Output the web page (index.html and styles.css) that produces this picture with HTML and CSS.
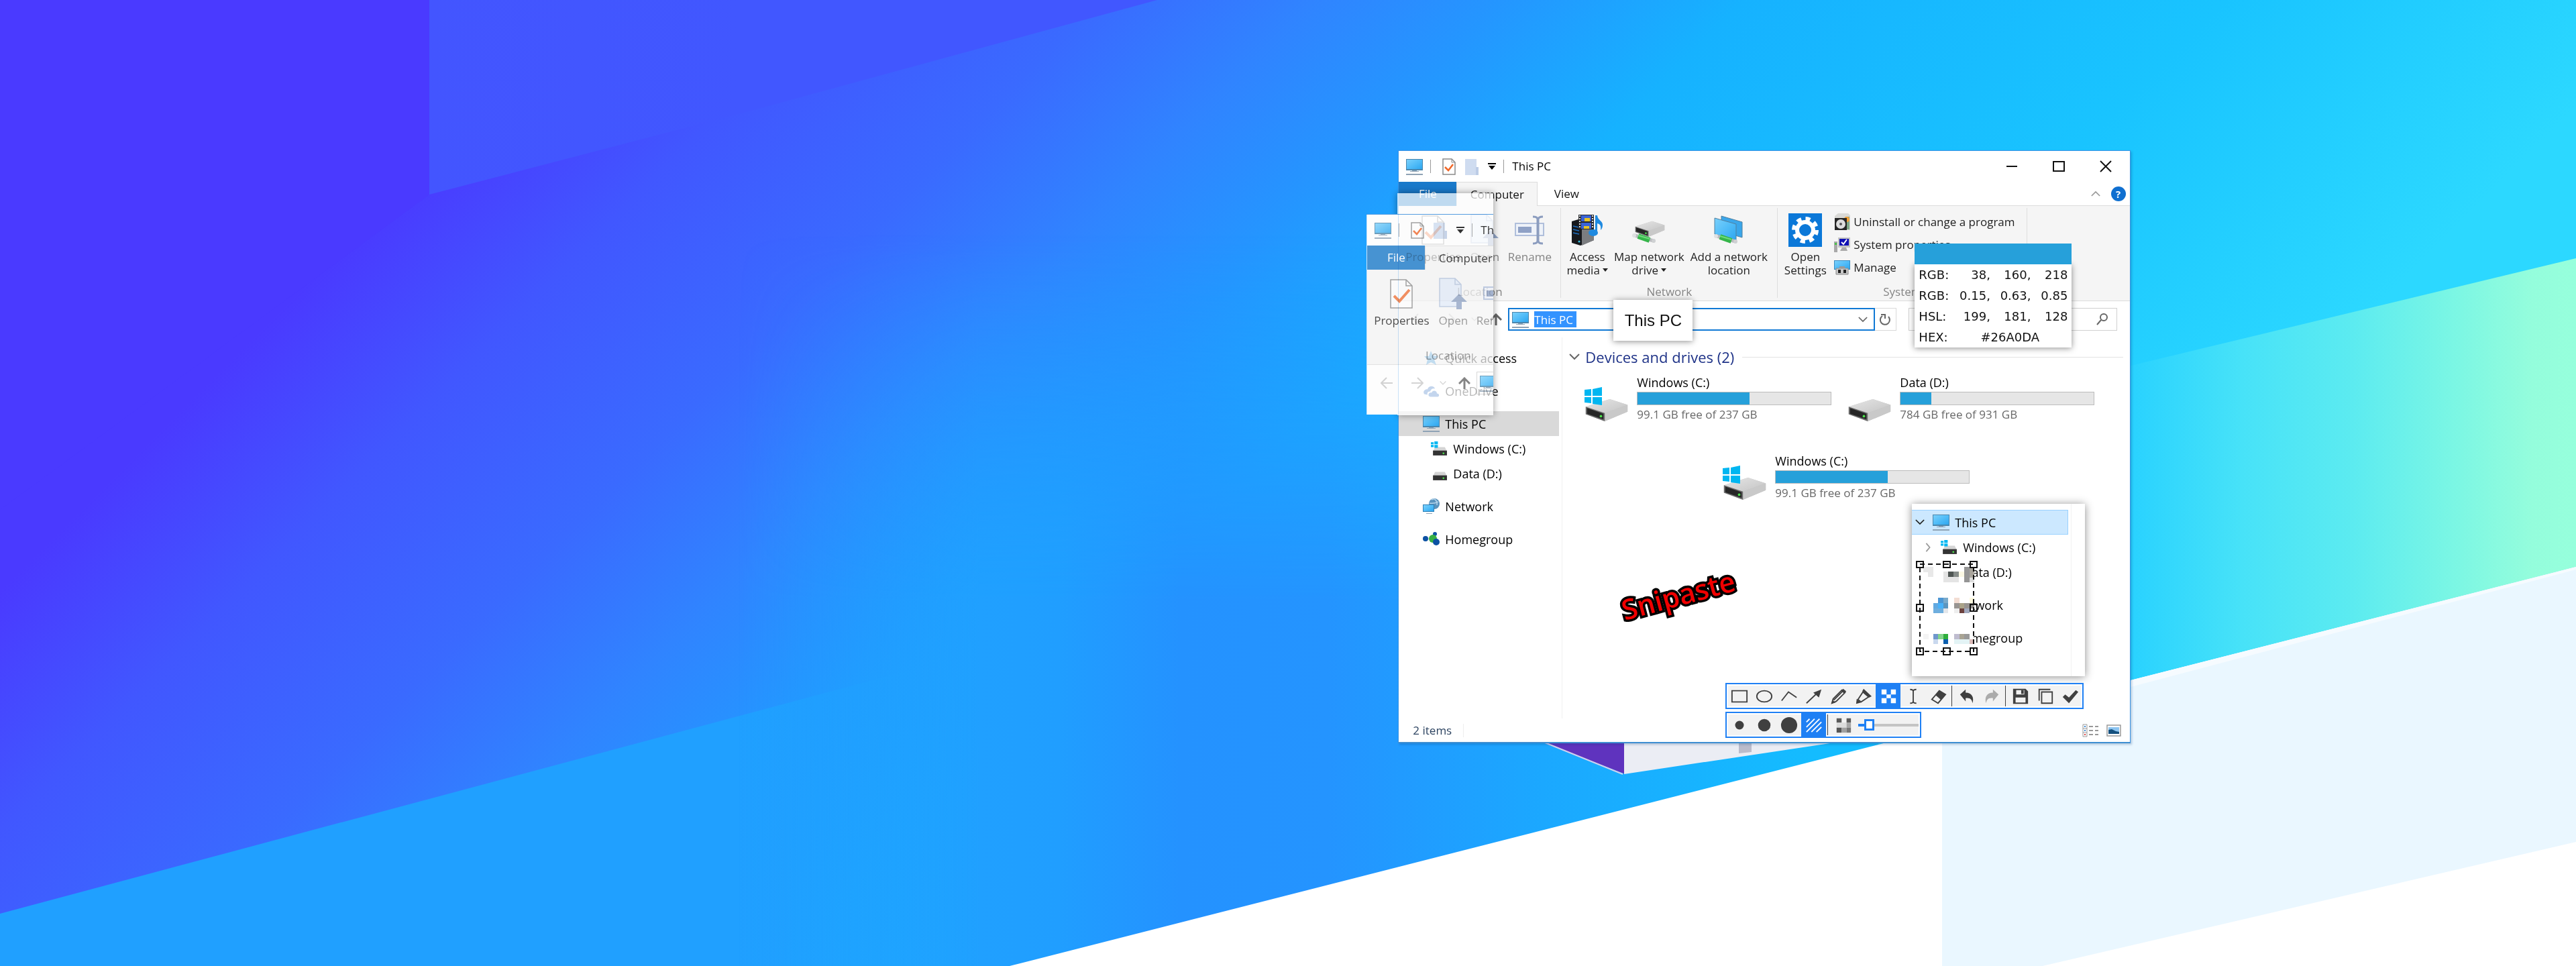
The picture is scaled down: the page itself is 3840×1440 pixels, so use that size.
FILE: index.html
```
<!DOCTYPE html>
<html lang="en">
<head>
<meta charset="utf-8">
<title>Snipaste</title>
<link rel="stylesheet" href="styles.css">
</head>
<body>
<svg class="sprite" aria-hidden="true">
  <defs>
    <linearGradient id="screen" x1="0" y1="0" x2="1" y2="1"><stop offset="0" stop-color="#7ad0fb"/><stop offset=".5" stop-color="#52bdf8"/><stop offset="1" stop-color="#2ea6ef"/></linearGradient>
    <linearGradient id="metal" x1="0" y1="0" x2="1" y2="1"><stop offset="0" stop-color="#e6e6e6"/><stop offset="1" stop-color="#c4c4c4"/></linearGradient>
    <symbol id="pc" viewBox="0 0 25 25"><path d="M0 1h25v17H0z" fill="#4a86ad"/><path d="M1 2h23v14H1z" fill="url(#screen)"/><path d="M9 18h7v1H9zM6 19h13v1H6zM0 23h25v2H0z" fill="#8fa3b5"/></symbol>
    <symbol id="doc" viewBox="0 0 20 25"><path d="M1 1h13l5 5v18H1z" fill="#fff" stroke="#8a8a8a" stroke-width="1.5"/><path d="M14 1v5h5" fill="none" stroke="#8a8a8a"/><path d="M4 13l5 5 7-9" fill="none" stroke="#f0682a" stroke-width="2.5"/></symbol>
    <symbol id="folder" viewBox="0 0 20 25"><path d="M0 1h17v12h3v12H0z" fill="#cfdcf0"/><path d="M16 13h4v12h-4z" fill="#bccce6"/></symbol>
    <symbol id="pulldown" viewBox="0 0 12 12"><path d="M0 1h12v2H0z" /><path d="M1 5h10l-5 6z"/></symbol>
    <symbol id="props" viewBox="0 0 34 44"><path d="M1 1h23l9 9v33H1z" fill="#fcfcfc" stroke="#8a8a8a" stroke-width="1.5"/><path d="M24 1v9h9" fill="none" stroke="#8a8a8a" stroke-width="1.5"/><path d="M6 25l8 8 15-17" fill="none" stroke="#f0743a" stroke-width="4"/></symbol>
    <symbol id="open" viewBox="0 0 42 48"><path d="M1 1h23l9 9v33H1z" fill="#e2ebf8" stroke="#b4c3dc" stroke-width="1.5"/><path d="M24 1v9h9" fill="none" stroke="#b4c3dc" stroke-width="1.5"/><path d="M30 24l12 12h-8v11h-8V36h-8z" fill="#92a5c6"/></symbol>
    <symbol id="rename" viewBox="0 0 44 44"><path d="M1 12h42v18H1z" fill="#eef2f9" stroke="#b0bfdb" stroke-width="2"/><path d="M5 17h20v9H5z" fill="#8fa1c6"/><path d="M27 2c4 0 7 1 7 4v32c0 3-3 4-7 4M42 2c-4 0-7 1-7 4v32c0 3 3 4 7 4" fill="none" stroke="#8c9dbf" stroke-width="3"/></symbol>
    <symbol id="media" viewBox="0 0 48 48"><path d="M1 11l13-4 20 5v27l-20 8-13-4z" fill="#17191d"/><path d="M16 17l18-4v26l-18 8z" fill="#7b7d80"/><path d="M3 18l9 2M3 23l9 2M3 28l9 2" stroke="#1e6fc0" stroke-width="1.5"/><circle cx="12" cy="41" r="1.5" fill="#3cc8e8"/><path d="M11 1h23v22H11z" fill="#26282c"/><path d="M15 2h15v9H15zM15 13h15v9H15z" fill="#3a63d6"/><path d="M20 6h8v5h-8zM19 18h8v4h-8z" fill="#e8c424"/><path d="M13 2v20M32 2v20" stroke="#ddd" stroke-width="2" stroke-dasharray="2 2"/><ellipse cx="33" cy="28" rx="7" ry="5" fill="#1f8ae0"/><path d="M36 28V2h3c1 8 8 8 8 14 0 4-1 6-3 8 1-7-1-9-5-10v14z" fill="#1f8ae0"/></symbol>
    <symbol id="drive" viewBox="0 0 66 36"><path d="M0 13L38 1l28 9v11L30 36 0 25z" fill="#c4c4c4"/><path d="M0 13L38 1l28 9-36 13z" fill="url(#metal)"/><path d="M30 23l36-13v11L30 36z" fill="#c9c9c9"/><path d="M0 13l30 10v13L0 25z" fill="#6b6b6b"/><path d="M2 15l26 9v9L2 24z" fill="#262626"/><circle cx="24" cy="28" r="2" fill="#4be04b"/></symbol>
    <symbol id="winlogo" viewBox="0 0 26 27"><path d="M0 4l10-1v10H0zM12 3l14-3v13H12zM0 15h10v9L0 23zM12 15h14v12l-14-2z" fill="#00b6f1"/></symbol>
    <symbol id="pipe" viewBox="0 0 36 16"><path d="M4 4l28 8" stroke="#b9bcbf" stroke-width="5" stroke-linecap="round"/><path d="M9 5l17 6" stroke="#35b54a" stroke-width="8"/><path d="M9 4l17 5" stroke="#6fdc7c" stroke-width="2"/><circle cx="3" cy="4" r="3" fill="#dfe1e2"/><circle cx="32" cy="12" r="3" fill="#cfd1d3"/></symbol>
    <symbol id="mapdrive" viewBox="0 0 50 44"><svg x="4" y="8" width="45" height="24" viewBox="0 0 66 36"><use href="#drive"/></svg><use href="#pipe" x="0" y="26" width="36" height="16"/></symbol>
    <symbol id="addloc" viewBox="0 0 44 44"><path d="M11 1l31 9v23l-31-9z" fill="#3aa6ea" stroke="#51809f"/><path d="M1 4l32 9v24L1 28z" fill="url(#screen)" stroke="#51809f"/><use href="#pipe" x="0" y="27" width="36" height="16"/></symbol>
    <symbol id="gear" viewBox="0 0 50 50"><path d="M0 0h50v50H0z" fill="#0b78d8"/><circle cx="25" cy="25" r="12" fill="none" stroke="#fff" stroke-width="6"/><circle cx="25" cy="25" r="17" fill="none" stroke="#fff" stroke-width="6" stroke-dasharray="7 6.35"/></symbol>
    <symbol id="uninstall" viewBox="0 0 24 26"><path d="M1 4l5-4h15l3 3v22H1z" fill="#d9d9d6"/><path d="M17 5h6v19h-6z" fill="#7fa886"/><circle cx="19" cy="9" r="4" fill="#f2a13a"/><path d="M1 7h18v18H1z" fill="#262626"/><circle cx="10" cy="16" r="7" fill="#ddd"/><circle cx="10" cy="16" r="2" fill="#555"/></symbol>
    <symbol id="sysprops" viewBox="0 0 24 22"><path d="M0 6h5v16H0z" fill="#a9a9a9"/><path d="M1 8h3v3H1z" fill="#4bc24b"/><path d="M6 0h18v15H6z" fill="#c5c5c2"/><path d="M8 2h14v10H8z" fill="#1010b4"/><path d="M11 7l3 3 5-7" fill="none" stroke="#fff" stroke-width="2"/><path d="M12 15h6l2 5H9z" fill="#aaa"/></symbol>
    <symbol id="manage" viewBox="0 0 24 24"><path d="M0 1h24v14H0z" fill="#3c8cc0"/><path d="M1 2h22v12H1z" fill="url(#screen)"/><path d="M3 13h18v9H3z" fill="#c8c8c8" stroke="#888"/><path d="M8 10h8v3H8z" fill="#999"/><path d="M6 15h4v5H6zM14 15h4v5h-4z" fill="#222"/></symbol>
    <symbol id="smalldrive" viewBox="0 0 24 22"><path d="M6 9h14l3 6H3z" fill="#d4d4d4"/><path d="M3 14h20v7H3z" fill="#333"/><circle cx="18" cy="18" r="1.3" fill="#4be04b"/></symbol>
    <symbol id="smallwin" viewBox="0 0 24 22"><use href="#smalldrive"/><path d="M0 2h4v3H0zM5 1h5v4H5zM0 6h4v3H0zM5 6h5v4H5z" fill="#00b6f1"/></symbol>
    <symbol id="network" viewBox="0 0 25 25"><circle cx="17" cy="9" r="8" fill="#5a93bd"/><path d="M13 3c5-3 9 2 8 8M10 8c5 1 9 0 13-2" fill="none" stroke="#b4d4ea" stroke-width="1.5"/><path d="M0 10h17v11H0z" fill="#2f7fb5"/><path d="M1 11h15v9H1z" fill="url(#screen)"/><path d="M5 23h9v1H5z" fill="#8fa3b5"/></symbol>
    <symbol id="homegroup" viewBox="0 0 25 25"><path d="M4 12h11l3-8M15 12l4 5" fill="none" stroke="#a8cce6" stroke-width="1"/><circle cx="4" cy="12" r="4" fill="#0c51a3"/><circle cx="18" cy="5" r="3" fill="#0c51a3"/><circle cx="15" cy="12" r="6" fill="#37b044"/><circle cx="20" cy="17" r="5" fill="#0c51a3"/></symbol>
    <symbol id="star" viewBox="0 0 25 25"><path d="M12 2l3 7 8 1-6 5 3 8-8-4-7 4 2-8-5-5h7z" fill="#3b9be0"/></symbol>
    <symbol id="cloud" viewBox="0 0 25 20"><path d="M2 15c-3-5 3-8 5-7 1-6 10-6 11-1-5-1-6 2-7 4-4 0-5 3-4 5z" fill="#2a68bd"/><path d="M9 18c-2-4 2-6 4-5 2-5 8-3 8 1 4 0 4 5 1 5H11z" fill="#2a68bd"/></symbol>
    <symbol id="back" viewBox="0 0 18 18"><path d="M18 9H1M9 1L1 9l8 8" fill="none" stroke="currentColor" stroke-width="2"/></symbol>
    <symbol id="fwd" viewBox="0 0 18 18"><path d="M0 9h17M9 1l8 8-8 8" fill="none" stroke="currentColor" stroke-width="2"/></symbol>
    <symbol id="up" viewBox="0 0 18 18"><path d="M9 18V2M1 10l8-8 8 8" fill="none" stroke="currentColor" stroke-width="3"/></symbol>
    <symbol id="down" viewBox="0 0 16 10"><path d="M1 1l7 7 7-7" fill="none" stroke="currentColor" stroke-width="2"/></symbol>
  </defs>
</svg>

<svg class="wallpaper" viewBox="0 0 3840 1440" preserveAspectRatio="xMidYMid slice" aria-hidden="true">
  <defs>
    <linearGradient id="sky" gradientUnits="userSpaceOnUse" x1="0" y1="0" x2="2000" y2="2000">
      <stop offset=".22" stop-color="#4a3aff"/><stop offset=".31" stop-color="#4157ff"/><stop offset=".41" stop-color="#3a6aff"/><stop offset=".49" stop-color="#3084ff"/><stop offset=".56" stop-color="#2496ff"/><stop offset=".65" stop-color="#16b2ff"/><stop offset=".83" stop-color="#19c4ff"/><stop offset=".93" stop-color="#24d0ff"/><stop offset="1" stop-color="#2cd8ff"/>
    </linearGradient>
    <linearGradient id="band" gradientUnits="userSpaceOnUse" x1="1100" y1="0" x2="3100" y2="0">
      <stop offset="0" stop-color="#20a0ff" stop-opacity="0"/><stop offset=".18" stop-color="#20a0ff"/><stop offset=".24" stop-color="#209eff"/><stop offset=".33" stop-color="#2492ff"/><stop offset=".44" stop-color="#2494ff"/><stop offset=".6" stop-color="#1ba8ff"/><stop offset=".8" stop-color="#14bcff"/><stop offset="1" stop-color="#14bcff"/>
    </linearGradient>
    <linearGradient id="fade" x1="0" y1="0" x2="0" y2="1"><stop offset="0" stop-color="#000"/><stop offset=".5" stop-color="#fff"/></linearGradient>
    <mask id="fadeMask"><rect x="1100" y="350" width="2076" height="1090" fill="url(#fade)"/></mask>
    <linearGradient id="upper" gradientUnits="userSpaceOnUse" x1="640" y1="0" x2="1100" y2="0">
      <stop offset="0" stop-color="#4355ff"/><stop offset="1" stop-color="#4157ff"/>
    </linearGradient>
    <linearGradient id="lower" gradientUnits="userSpaceOnUse" x1="1150" y1="0" x2="1600" y2="0">
      <stop offset="0" stop-color="#20a0ff"/><stop offset="1" stop-color="#20a0ff" stop-opacity="0"/>
    </linearGradient>
    <linearGradient id="mint" gradientUnits="userSpaceOnUse" x1="3176" y1="0" x2="3840" y2="0">
      <stop offset="0" stop-color="#29d2ff"/><stop offset=".25" stop-color="#47e2f8"/><stop offset=".5" stop-color="#5cebf0"/><stop offset=".72" stop-color="#7af6e4"/><stop offset=".9" stop-color="#94fddc"/><stop offset="1" stop-color="#96ffdc"/>
    </linearGradient>
  </defs>
  <path d="M0 0h3840v1440H0z" fill="url(#sky)"/>
  <path d="M640 0h1085l-605 165-480 125z" fill="url(#upper)"/>
  <path d="M0 0h640v290L0 760z" fill="#4a3aff"/>
  <path d="M0 1362L1290 1017l500-133v556H0z" fill="url(#lower)"/>
  <path d="M1100 350h2076v1090H1100z" fill="url(#band)" mask="url(#fadeMask)"/>
  <path d="M2800 636l1040-251v460L2800 1110z" fill="url(#mint)"/>
  <path d="M2303 1108l20-60h100v106z" fill="#5f33be"/>
  <path d="M2303 1107l116 47" stroke="#cfd0ee" stroke-width="2"/>
  <path d="M2421 1000h400v94l-400 60z" fill="#ebedf4"/>
  <path d="M2592 1100h19v21l-19 2z" fill="#bbbccb"/>
  <path d="M1505 1440L3840 845v595z" fill="#fff"/>
  <path d="M2895 1086l945-241v410l-795 185h-150z" fill="#eaf7ff"/>
  <path d="M3176 1014l664-169v4l-664 175z" fill="#f6fbff"/>
</svg>

<main class="stage">
  <section class="window" aria-label="This PC">
    <header class="titlebar">
      <svg class="i25"><use href="#pc"/></svg><span class="bar"></span>
      <svg class="i-doc"><use href="#doc"/></svg><svg class="i-doc"><use href="#folder"/></svg>
      <svg class="i12"><use href="#pulldown"/></svg><span class="bar bar-end"></span>
      <h1>This PC</h1>
      <div class="controls">
        <button aria-label="Minimize"><svg viewBox="0 0 18 18"><path d="M1 9h16" /></svg></button>
        <button aria-label="Maximize"><svg viewBox="0 0 18 18"><path d="M1 2h16v14H1z"/></svg></button>
        <button aria-label="Close"><svg viewBox="0 0 18 18"><path d="M1 1l16 16M17 1L1 17"/></svg></button>
      </div>
    </header>
    <nav class="tabs">
      <button class="tab file">File</button><button class="tab active">Computer</button><button class="tab view">View</button>
      <span class="help-set">
        <button class="plain" aria-label="Collapse ribbon"><svg class="fold"><use href="#down"/></svg></button>
        <button class="help" aria-label="Help">?</button>
      </span>
    </nav>
    <div class="ribbon">
      <div class="group g-location">
        <div class="tools">
          <button class="tool"><svg width="34" height="44"><use href="#props"/></svg>Properties</button>
          <button class="tool dim"><svg width="42" height="48"><use href="#open"/></svg>Open</button>
          <button class="tool dim"><svg width="44" height="44"><use href="#rename"/></svg>Rename</button>
        </div>
        <span class="caption">Location</span>
      </div>
      <div class="group g-network">
        <div class="tools">
          <button class="tool"><svg width="48" height="48"><use href="#media"/></svg>Access<span>media <i class="drop"></i></span></button>
          <button class="tool"><svg width="50" height="44"><use href="#mapdrive"/></svg>Map network<span>drive <i class="drop"></i></span></button>
          <button class="tool"><svg width="44" height="44"><use href="#addloc"/></svg>Add a network<span>location</span></button>
        </div>
        <span class="caption">Network</span>
      </div>
      <div class="group g-system">
        <div class="tools">
          <button class="tool"><svg width="50" height="50"><use href="#gear"/></svg>Open<span>Settings</span></button>
          <div class="links">
            <button><svg><use href="#uninstall"/></svg>Uninstall or change a program</button>
            <button><svg><use href="#sysprops"/></svg>System properties</button>
            <button><svg><use href="#manage"/></svg>Manage</button>
          </div>
        </div>
        <span class="caption">System</span>
      </div>
    </div>
    <div class="navrow">
      <div class="arrows"><svg class="i18 pale"><use href="#back"/></svg><svg class="i18 pale fwd"><use href="#fwd"/></svg><svg class="i10 pale"><use href="#down"/></svg><svg class="i18 up"><use href="#up"/></svg></div>
      <div class="address focus"><svg class="i25"><use href="#pc"/></svg><input class="picked" aria-label="Address" value="This PC"><svg class="chev"><use href="#down"/></svg></div>
      <button class="refresh" aria-label="Refresh"><svg viewBox="0 0 18 18"><path d="M5 4a7 7 0 1 0 9 1M3 2h6v6" /></svg></button>
      <label class="search"><input aria-label="Search This PC"><svg viewBox="0 0 18 18"><circle cx="11" cy="6" r="5"/><path d="M7 10l-6 7"/></svg></label>
    </div>
    <div class="panes">
      <ul class="side">
        <li><a href="#q"><svg><use href="#star"/></svg>Quick access</a></li>
        <li class="apart"><a href="#o"><svg><use href="#cloud"/></svg>OneDrive</a></li>
        <li class="apart current"><a href="#t"><svg><use href="#pc"/></svg>This PC</a></li>
        <li class="sub"><a href="#c"><svg><use href="#smallwin"/></svg>Windows (C:)</a></li>
        <li class="sub"><a href="#d"><svg><use href="#smalldrive"/></svg>Data (D:)</a></li>
        <li class="apart"><a href="#n"><svg><use href="#network"/></svg>Network</a></li>
        <li class="apart"><a href="#h"><svg><use href="#homegroup"/></svg>Homegroup</a></li>
      </ul>
      <div class="content">
        <h2><svg class="chev"><use href="#down"/></svg>Devices and drives (2)</h2>
        <div class="drives">
          <div class="drive"><span class="pic"><svg class="logo"><use href="#winlogo"/></svg><svg class="disk"><use href="#drive"/></svg></span>
            <div><strong>Windows (C:)</strong><div class="meter"><div style="width:58%"></div></div><small>99.1 GB free of 237 GB</small></div></div>
          <div class="drive"><span class="pic"><svg class="disk"><use href="#drive"/></svg></span>
            <div><strong>Data (D:)</strong><div class="meter"><div style="width:16%"></div></div><small>784 GB free of 931 GB</small></div></div>
        </div>
      </div>
    </div>
    <footer class="status"><span>2 items</span>
      <svg width="24" height="20" viewBox="0 0 24 20"><path d="M1 1h6v18H1zM1 7h6M1 13h6" fill="none" stroke="#999"/><path d="M10 4h14M10 10h14M10 16h14" stroke="#777" stroke-width="1.5" stroke-dasharray="6 3"/><path d="M3 3h2v2H3zM3 9h2v2H3z" fill="#3b8ad8"/><path d="M3 15h2v2H3z" fill="#e04848"/></svg>
      <svg width="22" height="18" viewBox="0 0 22 18"><path d="M1 1h20v16H1z" fill="#fff" stroke="#9a9a9a" stroke-width="1.5"/><path d="M3 4h16v10H3z" fill="#8cc4f0"/><path d="M3 8l5-1 6 3 5 1v3H3z" fill="#14507e"/></svg>
    </footer>
  </section>

  <div class="veil"></div>
  <div class="veil-back"></div>
  <section class="snip" aria-label="Pinned snip">
    <div class="snip-page">
      <div class="titlebar">
        <svg class="i25"><use href="#pc"/></svg><span class="bar"></span>
        <svg class="i-doc"><use href="#doc"/></svg><svg class="i-doc"><use href="#folder"/></svg>
        <svg class="i12"><use href="#pulldown"/></svg><span class="bar bar-end"></span><b>This PC</b>
      </div>
      <div class="tabs"><button class="tab file">File</button><button class="tab active">Computer</button></div>
      <div class="ribbon">
        <div class="group g-location">
          <div class="tools">
            <button class="tool"><svg width="34" height="44"><use href="#props"/></svg>Properties</button>
            <button class="tool dim"><svg width="42" height="48"><use href="#open"/></svg>Open</button>
            <button class="tool dim"><svg width="44" height="44"><use href="#rename"/></svg>Rename</button>
          </div>
          <span class="caption">Location</span>
        </div>
      </div>
      <div class="navrow">
        <div class="arrows"><svg class="i18 pale"><use href="#back"/></svg><svg class="i18 pale fwd"><use href="#fwd"/></svg><svg class="i10 pale"><use href="#down"/></svg><svg class="i18 up"><use href="#up"/></svg></div>
        <div class="address"><svg class="i25"><use href="#pc"/></svg></div>
      </div>
    </div>
  </section>

  <div class="tip">This PC</div>

  <table class="color">
    <caption></caption>
    <tr><th>RGB:</th><td>38,</td><td>160,</td><td>218</td></tr>
    <tr><th>RGB:</th><td>0.15,</td><td>0.63,</td><td>0.85</td></tr>
    <tr><th>HSL:</th><td>199,</td><td>181,</td><td>128</td></tr>
    <tr><th>HEX:</th><td colspan="3" class="hex">#26A0DA</td></tr>
  </table>

  <div class="drive floating"><span class="pic"><svg class="logo"><use href="#winlogo"/></svg><svg class="disk"><use href="#drive"/></svg></span>
    <div><strong>Windows (C:)</strong><div class="meter"><div style="width:58%"></div></div><small>99.1 GB free of 237 GB</small></div></div>

  <div class="stamp">Snipaste</div>

  <div class="tree">
    <ul>
      <li class="on"><svg class="tw dark"><use href="#down"/></svg><svg class="ic"><use href="#pc"/></svg>This PC</li>
      <li class="kid"><svg class="tw" viewBox="0 0 12 16"><path d="M3 1l6 7-6 7" fill="none" stroke="#999" stroke-width="2"/></svg><svg class="ic"><use href="#smallwin"/></svg>Windows (C:)</li>
      <li class="kid"><span class="tw"></span><span class="ic"></span>Data (D:)</li>
      <li class="apart"><span class="tw"></span><span class="ic"></span>Network</li>
      <li class="apart"><span class="tw"></span><span class="ic"></span>Homegroup</li>
    </ul>
    <svg class="mosaic" viewBox="0 0 94 142">
      <path d="M6 6h80v130H6z" fill="#fff"/>
      <g shape-rendering="crispEdges">
        <path d="M11 10h15v15h-8v-7h-7z" fill="#e8e8e8"/><path d="M41 17h23v16H41z" fill="#e4e4e4"/><path d="M48 17h8v8h-8z" fill="#4f5553"/><path d="M56 17h8v8h-8z" fill="#858b88"/><path d="M64 17h8v8h-8z" fill="#fbf8e4"/><path d="M72 10h8v23h-8z" fill="#959595"/><path d="M80 10h7v16h-7z" fill="#a8a49c"/><path d="M80 26h7v7h-7z" fill="#dcdcdc"/>
        <path d="M33 56h8v8h-8z" fill="#4c96d4"/><path d="M41 56h7v8h-7z" fill="#79aacb"/><path d="M26 64h7v8h-7z" fill="#62a9e0"/><path d="M33 64h8v8h-8z" fill="#48b2fa"/><path d="M41 64h7v8h-7z" fill="#5c95bf"/><path d="M26 72h15v7H26z" fill="#6eaede"/><path d="M41 72h7v7h-7z" fill="#e3e6ea"/>
        <path d="M57 56h8v8h-8z" fill="#f3ddd3"/><path d="M80 56h7v8h-7z" fill="#fdf9df"/><path d="M57 64h8v8h-8zM72 64h15v8H72z" fill="#989491"/><path d="M65 64h7v8h-7z" fill="#aaa389"/><path d="M57 72h8v7h-8z" fill="#ededed"/><path d="M65 72h7v7h-7z" fill="#6d4340"/><path d="M72 72h8v7h-8z" fill="#a0a8bd"/>
        <path d="M26 110h7v8h-7z" fill="#7097cc"/><path d="M33 110h8v8h-8z" fill="#84d48c"/><path d="M41 110h7v8h-7z" fill="#2fae3c"/><path d="M26 118h7v7h-7z" fill="#c9d8ee"/><path d="M41 118h7v7h-7z" fill="#0c5fae"/><path d="M57 110h8v8h-8z" fill="#bfbccf"/><path d="M65 110h7v8h-7z" fill="#a9a494"/><path d="M72 110h8v8h-8z" fill="#999"/><path d="M57 118h23v7H57z" fill="#e3f3f5"/><path d="M80 118h7v7h-7z" fill="#dcbcb9"/><path d="M11 110h8v8h-8z" fill="#f4f4f4"/>
      </g>
      <path d="M6 6h80v130H6z" fill="none" stroke="#111" stroke-width="2" stroke-dasharray="7 5"/>
      <g fill="none" stroke="#111" stroke-width="2"><path d="M1 2h10v9H1zM41 2h10v9H41zM81 2h10v9H81zM1 66h10v10H1zM81 66h10v10H81zM1 131h10v10H1zM41 131h10v10H41zM81 131h10v10H81z"/></g>
    </svg>
  </div>

  <div class="bars">
    <div class="toolbar">
      <button aria-label="Rectangle"><svg viewBox="0 0 28 28"><path d="M2 5h24v18H2z"/></svg></button>
      <button aria-label="Ellipse"><svg viewBox="0 0 28 28"><ellipse cx="14" cy="14" rx="12" ry="9"/></svg></button>
      <button aria-label="Line"><svg viewBox="0 0 28 28"><path d="M2 21L13 7l13 9"/></svg></button>
      <button aria-label="Arrow"><svg viewBox="0 0 28 28"><path d="M2 25L18 10"/><path class="s" d="M26 3l-4 13-9-8z"/></svg></button>
      <button aria-label="Pencil"><svg viewBox="0 0 28 28"><path d="M3 25l2-7L19 4l5 4L10 22zM6 20L20 6"/><path class="s" d="M18 5l3-3 5 4-3 4zM2 26l2-6 5 4z"/></svg></button>
      <button aria-label="Marker"><svg viewBox="0 0 28 28"><path d="M5 19L13 7l9 8-12 8zM13 4l12 10"/><path class="s" d="M3 18l7 6-8 2zM14 2l-2 4 11 10 4-2z"/></svg></button>
      <button aria-label="Mosaic" class="on"><svg viewBox="0 0 28 28"><path class="s" d="M3 3h8v8H3zM18 3h8v8h-8zM11 11h7v6h-7zM3 17h8v8H3zM18 17h8v8h-8z"/></svg></button>
      <button aria-label="Text"><svg viewBox="0 0 28 28"><path d="M9 3c4 0 5 1 5 3v16c0 2-1 3-5 3M19 3c-4 0-5 1-5 3v16c0 2 1 3 5 3"/></svg></button>
      <button aria-label="Eraser"><svg viewBox="0 0 28 28"><path d="M4 19L16 5l10 6-12 14z"/><path class="s" d="M10 12l6-8 10 7-7 9z"/></svg></button>
      <span class="cut"></span>
      <button aria-label="Undo"><svg viewBox="0 0 28 28"><path class="s" d="M3 11L12 3v5c10 0 14 8 11 17-1-6-4-9-11-8v5z"/></svg></button>
      <button aria-label="Redo" disabled><svg viewBox="0 0 28 28"><path class="s" d="M25 11L16 3v5C6 8 2 16 5 25c1-6 4-9 11-8v5z"/></svg></button>
      <span class="cut"></span>
      <button aria-label="Save"><svg viewBox="0 0 28 28"><path class="s" fill-rule="evenodd" d="M2 2h20l4 4v20H2zM7 4v7h13V4zM6 16v8h16v-8z"/><path class="s" d="M15 4h4v6h-4z"/></svg></button>
      <button aria-label="Copy"><svg viewBox="0 0 28 28"><path d="M8 7h17v18H8zM4 21V3h18"/></svg></button>
      <button aria-label="Done"><svg viewBox="0 0 28 28"><path class="s" d="M2 15l4-4 6 5L23 4l4 3-15 18z"/></svg></button>
    </div>
    <div class="toolbar options">
      <button aria-label="Small"><svg viewBox="0 0 28 28"><circle class="s" cx="14" cy="14" r="7"/></svg></button>
      <button aria-label="Medium"><svg viewBox="0 0 28 28"><circle class="s" cx="14" cy="14" r="10"/></svg></button>
      <button aria-label="Large"><svg viewBox="0 0 28 28"><circle class="s" cx="14" cy="14" r="13"/></svg></button>
      <button aria-label="Area" class="on"><svg viewBox="0 0 28 28"><path d="M2 9l5-5M2 17L15 4M2 25L23 4M10 25L26 9M18 25l8-8"/></svg></button>
      <span class="cut"></span>
      <svg class="blocks" viewBox="0 0 28 28" aria-hidden="true"><path d="M3 3h8v7H3zM19 3h7v7h-7z" fill="#5a5a5a"/><path d="M11 10h8v8h-8zM3 10h8v8H3z" fill="#dcdcdc"/><path d="M19 10h7v8h-7z" fill="#a5a5a5"/><path d="M3 18h8v8H3z" fill="#555"/><path d="M11 18h8v8h-8z" fill="#a0a0a0"/><path d="M19 18h7v8h-7z" fill="#777"/></svg>
      <input type="range" aria-label="Block size" min="0" max="100" value="12">
    </div>
  </div>
</main>
</body>
</html>
```
FILE: styles.css
```
* { box-sizing: border-box; }
html, body { height: 100%; }
body {
  margin: 0;
  position: relative;
  min-height: 1140px;
  overflow: hidden;
  font: 17px/20px "Open Sans", "Noto Sans", sans-serif;
  color: #111;
  background: #fff;
}
button, input { font: inherit; color: inherit; border: 0; padding: 0; background: none; }
svg { display: block; flex: none; }
.sprite { position: absolute; width: 0; height: 0; }
.wallpaper { position: absolute; inset: 0; width: 100%; height: 100%; }

.stage { position: absolute; left: 54.28%; top: 224px; width: 28.42%; min-width: 1091px; }

/* explorer window */
.window {
  background: #fff;
  border: 1px solid #3a93e4;
  border-bottom: 2px solid #3f8fd2;
  box-shadow: 2px 2px 3px rgba(0, 60, 120, .25);
}
.titlebar { display: flex; align-items: center; height: 46px; padding-left: 11px; }
.titlebar h1, .titlebar b { margin: 0; font-size: 17px; font-weight: 400; color: #000; }
.i25 { width: 25px; height: 25px; }
.i-doc { width: 20px; height: 25px; margin-right: 14px; }
.i12 { width: 12px; height: 12px; }
.i18 { width: 18px; height: 18px; }
.i10 { width: 10px; height: 8px; }
.bar { width: 1px; height: 20px; background: #999; margin: 0 17px 0 11px; }
.bar-end { margin: 0 12px 0 11px; }
.controls { display: flex; gap: 52px; margin-left: auto; padding-right: 27px; }
.controls svg { width: 18px; height: 18px; fill: none; stroke: #111; stroke-width: 2; }
.tabs { display: flex; height: 36px; border-bottom: 1px solid #dcdcdc; }
.tab { height: 36px; }
.tab.file { width: 86px; background: #1979ca; color: #fff; }
.tab.active { width: 121px; background: #f5f5f5; border: 1px solid #dcdcdc; border-bottom: 0; }
.tab.view { width: 86px; }
.help-set { display: flex; align-items: center; gap: 16px; margin-left: auto; padding-right: 6px; }
.fold { width: 14px; height: 9px; color: #999; transform: rotate(180deg); }
.help { width: 22px; height: 22px; border-radius: 11px; background: #0f6fd0; color: #fff; font-size: 15px; line-height: 22px; font-weight: 700; }

.ribbon { display: flex; height: 142px; background: #f5f5f5; border-bottom: 1px solid #dcdcdc; padding: 3px 0 4px; }
.group { display: flex; flex-direction: column; justify-content: space-between; border-right: 1px solid #dedede; }
.g-location { width: 242px; }
.g-network { width: 323px; }
.g-system { width: 372px; }
.tools { display: flex; }
.tool { display: flex; flex-direction: column; align-items: center; padding-top: 6px; color: #222; white-space: nowrap; }
.tool svg { height: 54px; margin-bottom: 3px; }
.tool.dim { color: #858585; }
.g-location .tool { width: 52px; }
.g-location .tool:first-child { width: 102px; }
.g-location .tool:last-child { width: 82px; }
.g-network .tool { width: 78px; }
.g-network .tool:nth-child(2) { width: 106px; }
.g-network .tool:nth-child(3) { width: 132px; }
.g-system .tool { width: 82px; }
.drop { display: inline-block; border: 4px solid transparent; border-top: 5px solid #222; border-bottom: 0; vertical-align: 4px; }
.links { display: flex; flex-direction: column; padding: 4px 0 0 2px; }
.links button { display: flex; align-items: center; gap: 5px; height: 34px; color: #222; white-space: nowrap; }
.links svg { width: 24px; height: 26px; }
.caption { text-align: center; color: #858585; height: 19px; }

.navrow { display: flex; height: 54px; padding: 10px 19px 10px 0; color: #666; }
.arrows { display: flex; align-items: center; width: 163px; padding-left: 20px; }
.pale { color: #c9c9c9; }
.fwd { margin: 0 24px 0 28px; }
.up { margin-left: 18px; }
.address { display: flex; align-items: center; flex: 1; padding: 0 9px 0 4px; border: 1px solid #d0d0d0; }
.address.focus { border: 2px solid #1079d5; }
.picked { width: 63px; height: 24px; margin: 0 auto 0 8px; background: #3393ff; color: #fff; }
.chev { width: 16px; height: 10px; color: #666; }
.address .chev { width: 14px; height: 9px; }
.refresh { display: grid; place-items: center; width: 32px; border: 1px solid #d9d9d9; border-left: 0; }
.refresh svg, .search svg { width: 18px; height: 18px; fill: none; stroke: #666; stroke-width: 2; }
.search { display: flex; align-items: center; width: 311px; margin-left: 18px; padding-right: 12px; border: 1px solid #d0d0d0; }
.search input { flex: 1; min-width: 0; }

.panes { display: flex; min-height: 568px; }
.side { width: 244px; margin: 0; padding: 12px 4px 0 0; list-style: none; border-right: 1px solid #f0f0f0; font-size: 18px; color: #000; }
.side a { display: flex; align-items: center; gap: 8px; height: 37px; padding-left: 36px; color: inherit; text-decoration: none; }
.side .sub a { padding-left: 48px; }
.side svg { width: 25px; height: 25px; }
.apart { margin-top: 12px; }
.current a { background: #d9d9d9; }
.content { flex: 1; padding: 15px 10px 0 10px; }
.content h2 { display: flex; align-items: center; gap: 8px; height: 28px; margin: 0 0 13px; font-size: 22px; line-height: 28px; font-weight: 400; color: #1e3287; }
.content h2::after { content: ""; flex: 1; height: 1px; margin-left: 4px; background: #e2e2e2; }
.drives { display: flex; gap: 24px; padding-left: 23px; }
.drive { display: flex; gap: 12px; width: 368px; }
.drive > div { flex: 1; }
.pic { display: flex; flex-direction: column; justify-content: flex-end; width: 66px; height: 69px; }
.logo { width: 26px; height: 27px; margin-bottom: -10px; z-index: 1; }
.disk { width: 66px; height: 34px; }
.drive strong { display: block; height: 25px; font-size: 18px; line-height: 22px; font-weight: 400; color: #000; }
.drive small { display: block; font-size: 17px; line-height: 28px; color: #686868; }
.meter { height: 20px; border: 1px solid #bcbcbc; background: #e6e6e6; }
.meter div { height: 18px; background: #26a0da; }
.status { display: flex; align-items: center; gap: 12px; height: 35px; padding: 0 13px 0 21px; color: #2c4360; }
.status span { margin-right: auto; padding-right: 17px; border-right: 1px solid #eee; }

/* translucent pinned snip */
.veil { position: absolute; left: -1px; top: 64px; width: 143px; height: 331px; background: rgba(255, 255, 255, .72); box-shadow: 0 0 10px rgba(0, 0, 0, .4); }
.veil-back { position: absolute; left: -47px; top: 95px; width: 47px; height: 299px; background: #fdfdfd; border-left: 1px solid #cde4fa; }
.snip { position: absolute; left: -47px; top: 95px; width: 189px; height: 299px; overflow: hidden; opacity: .8; mix-blend-mode: multiply; background: #fff; border-top: 1px solid #2a87dc; }
.snip-page { width: 1091px; padding-left: 1px; }

.tip { position: absolute; left: 321px; top: 223px; width: 118px; height: 61px; background: #fff; box-shadow: 0 1px 9px rgba(0, 0, 0, .45); font: 24px/61px "Liberation Sans", sans-serif; text-align: center; color: #111; }

.color { position: absolute; left: 770px; top: 139px; width: 234px; border-collapse: collapse; background: #fff; box-shadow: 0 1px 9px rgba(0, 0, 0, .45); font: 18px/31px "DejaVu Sans", sans-serif; color: #111; }
.color caption { height: 31px; background: #26a0da; }
.color th { width: 52px; padding: 0 0 0 6px; font-weight: 400; text-align: left; }
.color td { padding: 0; text-align: right; }
.color td:last-child { padding-right: 6px; }
.color .hex { text-align: center; padding-left: 4px; }

.floating { position: absolute; left: 484px; top: 452px; }

.stamp { position: absolute; left: 331px; top: 633px; font-size: 42px; line-height: 60px; font-weight: 600; color: #f00000; -webkit-text-stroke: 7px #000; paint-order: stroke fill; transform: rotate(-15deg); }

/* pinned folder tree */
.tree { position: absolute; left: 766px; top: 527px; width: 258px; height: 257px; background: #fff; box-shadow: 0 1px 12px rgba(0, 0, 0, .45); font-size: 18px; color: #000; }
.tree ul { margin: 0; padding: 9px 0 0; list-style: none; width: 238px; height: 257px; border-right: 1px solid #f2f2f2; }
.tree li { display: flex; align-items: center; height: 37px; padding-left: 5px; margin-right: 4px; }
.tree .kid { padding-left: 17px; }
.tree .on { background: #cce8ff; border: 1px solid #99d1ff; border-left: 0; }
.tw { width: 14px; height: 14px; margin-right: 12px; }
.dark { height: 9px; color: #222; }
.ic { width: 25px; height: 25px; margin-right: 8px; }
.mosaic { position: absolute; left: 6px; top: 84px; width: 94px; height: 142px; }

/* annotation toolbars */
.bars { position: absolute; left: 488px; top: 794px; display: flex; flex-direction: column; align-items: flex-start; gap: 4px; }
.toolbar { display: flex; align-items: center; height: 39px; border: 2px solid #1f80f4; background: #f2f2f2; box-shadow: inset 0 0 0 2px #fff; }
.toolbar button { display: grid; place-items: center; width: 37px; height: 37px; }
.toolbar button svg { width: 26px; height: 26px; fill: none; stroke: #404040; stroke-width: 2; }
.toolbar .s { fill: #404040; stroke: none; }
.toolbar .on { background: #1f80f4; }
.toolbar .on svg { stroke: #fff; }
.toolbar .on .s { fill: #fff; }
.toolbar button:disabled .s { fill: #ababab; }
.cut { width: 1px; height: 31px; margin: 0 3px 0 2px; background: #404040; }
.blocks { width: 26px; height: 26px; margin: 0 9px 0 7px; }
.options input { width: 90px; height: 20px; margin: 0 2px 0 0; appearance: none; background: linear-gradient(90deg, #1f80f4 12px, #c4c4c4 12px) center / 100% 4px no-repeat; }
.options input::-webkit-slider-thumb { appearance: none; width: 15px; height: 17px; border: 3px solid #1f80f4; background: #fff; }
```
